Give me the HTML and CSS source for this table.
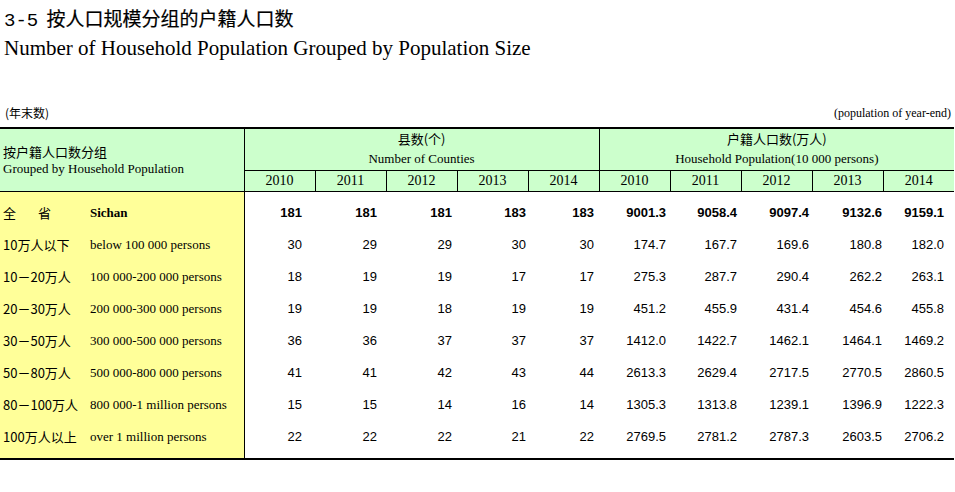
FILE: index.html
```html
<!DOCTYPE html>
<html lang="zh-CN">
<head>
<meta charset="utf-8">
<title>3-5 按人口规模分组的户籍人口数</title>
<link rel="stylesheet" href="styles.css">
</head>
<body>
<div class="page">
  <h1 class="title"><span class="num">3-5</span> 按人口规模分组的户籍人口数</h1>
  <h2 class="subtitle">Number of Household Population Grouped by Population Size</h2>
  <div class="note">
    <span class="note-cn">(年末数)</span>
    <span class="note-en">(population of year-end)</span>
  </div>
  <table class="data">
    <colgroup>
      <col class="c-lab1"><col class="c-lab2">
      <col class="c-num"><col class="c-num"><col class="c-num"><col class="c-num"><col class="c-num">
      <col class="c-num"><col class="c-num"><col class="c-num"><col class="c-num"><col class="c-num">
    </colgroup>
    <thead>
      <tr class="grp">
        <th class="corner" colspan="2" rowspan="2">
          <div class="cn">按户籍人口数分组</div>
          <div class="en">Grouped by Household Population</div>
        </th>
        <th class="group" colspan="5">
          <div class="cn">县数(个)</div>
          <div class="en">Number of Counties</div>
        </th>
        <th class="group" colspan="5">
          <div class="cn">户籍人口数(万人)</div>
          <div class="en">Household Population(10 000 persons)</div>
        </th>
      </tr>
      <tr class="years">
        <th>2010</th><th>2011</th><th>2012</th><th>2013</th><th>2014</th>
        <th>2010</th><th>2011</th><th>2012</th><th>2013</th><th>2014</th>
      </tr>
    </thead>
    <tbody>
      <tr class="first total">
        <td class="lab1"><span>全</span><span class="gap">省</span></td><td class="lab2 bold">Sichan</td>
        <td>181</td><td>181</td><td>181</td><td>183</td><td>183</td>
        <td>9001.3</td><td>9058.4</td><td>9097.4</td><td>9132.6</td><td>9159.1</td>
      </tr>
      <tr>
        <td class="lab1">10万人以下</td><td class="lab2">below 100 000 persons</td>
        <td>30</td><td>29</td><td>29</td><td>30</td><td>30</td>
        <td>174.7</td><td>167.7</td><td>169.6</td><td>180.8</td><td>182.0</td>
      </tr>
      <tr>
        <td class="lab1">10－20万人</td><td class="lab2">100 000-200 000 persons</td>
        <td>18</td><td>19</td><td>19</td><td>17</td><td>17</td>
        <td>275.3</td><td>287.7</td><td>290.4</td><td>262.2</td><td>263.1</td>
      </tr>
      <tr>
        <td class="lab1">20－30万人</td><td class="lab2">200 000-300 000 persons</td>
        <td>19</td><td>19</td><td>18</td><td>19</td><td>19</td>
        <td>451.2</td><td>455.9</td><td>431.4</td><td>454.6</td><td>455.8</td>
      </tr>
      <tr>
        <td class="lab1">30－50万人</td><td class="lab2">300 000-500 000 persons</td>
        <td>36</td><td>36</td><td>37</td><td>37</td><td>37</td>
        <td>1412.0</td><td>1422.7</td><td>1462.1</td><td>1464.1</td><td>1469.2</td>
      </tr>
      <tr>
        <td class="lab1">50－80万人</td><td class="lab2">500 000-800 000 persons</td>
        <td>41</td><td>41</td><td>42</td><td>43</td><td>44</td>
        <td>2613.3</td><td>2629.4</td><td>2717.5</td><td>2770.5</td><td>2860.5</td>
      </tr>
      <tr>
        <td class="lab1">80－100万人</td><td class="lab2">800 000-1 million persons</td>
        <td>15</td><td>15</td><td>14</td><td>16</td><td>14</td>
        <td>1305.3</td><td>1313.8</td><td>1239.1</td><td>1396.9</td><td>1222.3</td>
      </tr>
      <tr class="last">
        <td class="lab1">100万人以上</td><td class="lab2">over 1 million persons</td>
        <td>22</td><td>22</td><td>22</td><td>21</td><td>22</td>
        <td>2769.5</td><td>2781.2</td><td>2787.3</td><td>2603.5</td><td>2706.2</td>
      </tr>
    </tbody>
  </table>
</div>
</body>
</html>
```

FILE: styles.css
```css
html, body {
  margin: 0;
  padding: 0;
  background: #ffffff;
  color: #000000;
}

.page {
  width: 955px;
  font-family: "Liberation Serif", "Noto Sans CJK SC", serif;
}

.title {
  margin: 0;
  padding: 6px 0 0 4px;
  height: 24px;
  font-size: 19px;
  line-height: 24px;
  font-weight: normal;
  font-family: "Noto Sans CJK SC", sans-serif;
  -webkit-text-stroke: 0.2px #000;
}

.title .num {
  font-family: "Liberation Mono", monospace;
  margin-right: 4px;
  -webkit-text-stroke: 0;
}

.subtitle {
  margin: 6px 0 0 4px;
  height: 24px;
  font-size: 21px;
  line-height: 24px;
  font-weight: normal;
  font-family: "Liberation Serif", serif;
}

.note {
  display: flex;
  justify-content: space-between;
  margin-top: 45px;
  height: 16px;
  line-height: 16px;
  font-size: 12px;
  padding: 0 4px 0 5px;
}

.note-cn {
  font-family: "Noto Sans CJK SC", sans-serif;
}

.note-en {
  font-family: "Liberation Serif", serif;
}

.data {
  margin-top: 6px;
  width: 954px;
  table-layout: fixed;
  border-collapse: collapse;
  border-top: 2px solid #000;
  border-bottom: 2px solid #000;
  font-size: 13px;
}

.c-lab1 { width: 90px; }
.c-lab2 { width: 154px; }
.c-num { width: 71px; }

.data th {
  background: #ccffcc;
  font-weight: normal;
  padding: 0;
}

.corner {
  text-align: left;
  border-right: 1px solid #000;
  border-bottom: 1px solid #000;
  padding-left: 3px !important;
}

.corner .cn {
  font-family: "Noto Sans CJK SC", sans-serif;
  font-size: 13px;
  line-height: 17px;
}

.corner .en {
  font-family: "Liberation Serif", serif;
  font-size: 13px;
  line-height: 17px;
}

.grp .group {
  height: 41px;
  border-right: 1px solid #000;
  border-bottom: 1px solid #000;
  text-align: center;
  vertical-align: top;
}

.grp .group:last-child {
  border-right: none;
}

.group .cn {
  font-family: "Noto Sans CJK SC", sans-serif;
  font-size: 13px;
  line-height: 20px;
}

.group .en {
  font-family: "Liberation Serif", serif;
  font-size: 13px;
  line-height: 20px;
}

.years th {
  height: 20px;
  line-height: 20px;
  border-right: 1px solid #000;
  border-bottom: 1px solid #000;
  text-align: center;
  font-family: "Liberation Serif", serif;
  font-size: 14px;
}

.years th:last-child {
  border-right: none;
}

.data td {
  height: 32px;
  padding: 0;
  font-family: "Liberation Sans", sans-serif;
  font-size: 13px;
  line-height: 16px;
  text-align: right;
  vertical-align: middle;
  white-space: nowrap;
}

.data tr.first td {
  height: 32px;
  padding-top: 5px;
}

.data tr.last td {
  height: 32px;
  padding-bottom: 5px;
}

.data td.lab1,
.data td.lab2 {
  background: #ffff99;
  text-align: left;
  padding-left: 3px;
}

.data td.lab1 {
  font-family: "Noto Sans CJK SC", sans-serif;
}

.data td.lab2 {
  font-family: "Liberation Serif", serif;
  border-right: 1px solid #000;
  padding-left: 0;
}

.gap {
  margin-left: 22px;
}

.data td.bold {
  font-weight: bold;
}

.total td {
  font-weight: bold;
}

.total td.lab1 {
  font-weight: normal;
}

.data td:nth-child(3) { padding-right: 13px; }
.data td:nth-child(4) { padding-right: 9px; }
.data td:nth-child(5) { padding-right: 5px; }
.data td:nth-child(6) { padding-right: 2px; }
.data td:nth-child(7) { padding-right: 5px; }
.data td:nth-child(8) { padding-right: 4px; }
.data td:nth-child(9) { padding-right: 4px; }
.data td:nth-child(10) { padding-right: 3px; }
.data td:nth-child(11) { padding-right: 1px; }
.data td:nth-child(12) { padding-right: 10px; }
```
